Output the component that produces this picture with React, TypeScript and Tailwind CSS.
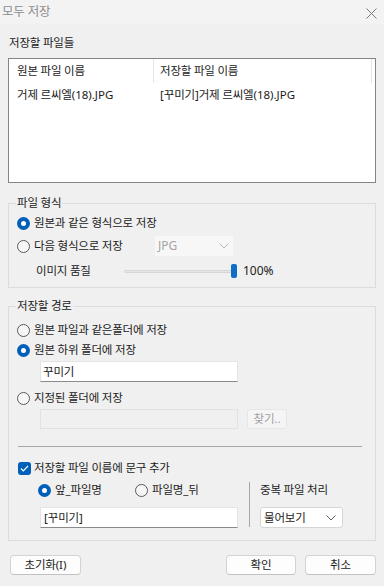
import React from "react";

const FONT = "font-['Noto_Sans','Noto_Sans_CJK_KR',sans-serif]";

function Radio({ checked }: { checked?: boolean }) {
  return checked ? (
    <span className="flex h-[13px] w-[13px] shrink-0 items-center justify-center rounded-full bg-[#005fb8]">
      <span className="h-[5px] w-[5px] rounded-full bg-white" />
    </span>
  ) : (
    <span className="h-[13px] w-[13px] shrink-0 rounded-full border border-[#5a5a5a] bg-[#f6f6f6]" />
  );
}

function Chevron({ color = "#5f5f5f" }: { color?: string }) {
  return (
    <svg width="10" height="6" viewBox="0 0 10 6" fill="none">
      <path d="M0.5 0.5 L5 5 L9.5 0.5" stroke={color} strokeWidth="1" />
    </svg>
  );
}

function Legend({ children }: { children: React.ReactNode }) {
  return (
    <div className="relative flex h-[16px] items-center">
      <div className="absolute left-0 right-0 top-[8px] h-px bg-[#dcdcdc]" />
      <span className="relative ml-[8px] bg-[#f0f0f0] px-[1px] leading-[16px]">{children}</span>
    </div>
  );
}

function Button({ children, className = "" }: { children: React.ReactNode; className?: string }) {
  return (
    <div
      className={`flex h-[20px] items-center justify-center rounded-[4px] border border-[#d3d3d3] border-b-[#c2c2c2] bg-[#fdfdfd] ${className}`}
    >
      {children}
    </div>
  );
}

export default function App() {
  return (
    <div className={`${FONT} h-[586px] w-[384px] overflow-hidden bg-[#f0f0f0] text-[11.5px] tracking-[-0.2px] text-[#1b1b1b]`}>
      {/* title bar */}
      <div className="flex h-[24px] items-center justify-between bg-[#f3f3f3] pl-[2px] pr-[6px]">
        <span className="text-[12.5px] tracking-[-0.2px] text-[#8c8c8c]">모두 저장</span>
        <svg width="11" height="11" viewBox="0 0 11 11" fill="none" className="mr-[1px] mt-[2px]">
          <path d="M0.5 0.5 L10.5 10.5 M10.5 0.5 L0.5 10.5" stroke="#7a7a7a" strokeWidth="1" />
        </svg>
      </div>

      <div className="px-[8px]">
        {/* files list */}
        <div className="mt-[11px] pl-[1px] leading-[16px]">저장할 파일들</div>
        <div className="mt-[7px] h-[125px] border border-[#858585] bg-white">
          <div className="flex h-[24px]">
            <div className="flex w-[145px] items-center border-r border-[#e5e5e5] pl-[8px]">원본 파일 이름</div>
            <div className="flex flex-1 items-center border-r border-[#e5e5e5] pl-[6px]">저장할 파일 이름</div>
            <div className="w-[3px]" />
          </div>
          <div className="flex h-[24px]">
            <div className="flex w-[145px] items-center pl-[8px]">
              거제 르씨엘<span className="tracking-normal">(18).JPG</span>
            </div>
            <div className="flex flex-1 items-center pl-[6px]">
              <span className="tracking-normal">[</span>꾸미기<span className="tracking-normal">]</span>거제 르씨엘
              <span className="tracking-normal">(18).JPG</span>
            </div>
          </div>
        </div>

        {/* file format group */}
        <div className="mt-[12px]">
          <Legend>파일 형식</Legend>
          <div className="-mt-[8px] h-[85px] border border-t-0 border-[#dcdcdc] px-[8px] pt-[10px]">
            <div className="flex h-[20px] items-center gap-[4px]">
              <Radio checked />
              <span>원본과 같은 형식으로 저장</span>
            </div>
            <div className="mt-[3px] flex h-[20px] items-center">
              <Radio />
              <span className="ml-[4px] w-[121px]">다음 형식으로 저장</span>
              <div className="flex h-[20px] w-[78px] items-center justify-between bg-[#f7f7f7] pl-[3px] pr-[4px] text-[#a5a5a5]">
                <span className="text-[12px] tracking-normal">JPG</span>
                <Chevron color="#b8b8b8" />
              </div>
            </div>
            <div className="mt-[5px] flex h-[20px] items-center">
              <span className="ml-[19px] w-[88px]">이미지 품질</span>
              <div className="relative flex h-[14px] w-[113px] items-center">
                <div className="h-[3px] w-full rounded-full border border-[#d6d6d6] bg-[#e6e6e6]" />
                <div className="absolute right-0 top-0 h-[14px] w-[6px] rounded-[2px] bg-[#0f6fc6]" />
              </div>
              <span className="ml-[6px] text-[12px] tracking-normal">100%</span>
            </div>
          </div>
        </div>

        {/* save path group */}
        <div className="mt-[10px]">
          <Legend>저장할 경로</Legend>
          <div className="-mt-[8px] h-[235px] border border-t-0 border-[#dcdcdc] pt-[14px]">
            <div className="px-[8px]">
              <div className="flex h-[20px] items-center gap-[4px]">
                <Radio />
                <span>원본 파일과 같은폴더에 저장</span>
              </div>
              <div className="flex h-[20px] items-center gap-[4px]">
                <Radio checked />
                <span>원본 하위 폴더에 저장</span>
              </div>
              <div className="ml-[23px] mt-[1px] flex h-[21px] w-[198px] items-center border border-[#e4e4e4] border-b-[#8a8a8a] bg-white pl-[2px]">
                꾸미기
              </div>
              <div className="mt-[6px] flex h-[20px] items-center gap-[4px]">
                <Radio />
                <span>지정된 폴더에 저장</span>
              </div>
              <div className="mt-[1px] flex h-[20px] items-center">
                <div className="ml-[23px] h-[20px] w-[198px] border border-[#e2e2e2] bg-[#f0f0f0]" />
                <div className="ml-[9px] flex h-[20px] w-[40px] items-center justify-center rounded-[3px] border border-[#e6e6e6] bg-[#f5f5f5] text-[#a0a0a0]">
                  찾기<span className="tracking-normal">..</span>
                </div>
              </div>
            </div>

            <div className="ml-[9px] mr-[13px] mt-[17px] h-px bg-[#a7a7a7]" />

            <div className="px-[9px]">
              <div className="mt-[14px] flex h-[14px] items-center gap-[3px]">
                <span className="flex h-[13px] w-[13px] items-center justify-center rounded-[3px] bg-[#005fb8]">
                  <svg width="9" height="7" viewBox="0 0 9 7" fill="none">
                    <path d="M1 3.5 L3.3 5.8 L8 1" stroke="white" strokeWidth="1.2" />
                  </svg>
                </span>
                <span>저장할 파일 이름에 문구 추가</span>
              </div>
              <div className="mt-[5px] flex">
                <div className="w-[231px]">
                  <div className="flex h-[20px] items-center">
                    <span className="ml-[20px]">
                      <Radio checked />
                    </span>
                    <span className="ml-[4px] w-[80px]">
                      앞<span className="tracking-normal">_</span>파일명
                    </span>
                    <Radio />
                    <span className="ml-[4px]">
                      파일명<span className="tracking-normal">_</span>뒤
                    </span>
                  </div>
                  <div className="ml-[22px] mt-[7px] flex h-[21px] w-[198px] items-center border border-[#e4e4e4] border-b-[#8a8a8a] bg-white pl-[3px]">
                    <span className="tracking-normal">[</span>꾸미기<span className="tracking-normal">]</span>
                  </div>
                </div>
                <div className="mt-[2px] h-[45px] w-px bg-[#a7a7a7]" />
                <div className="ml-[10px]">
                  <div className="flex h-[20px] items-center">중복 파일 처리</div>
                  <div className="mt-[7px] flex h-[21px] w-[83px] items-center justify-between rounded-[3px] border border-[#d6d6d6] bg-white pl-[3px] pr-[6px]">
                    <span>물어보기</span>
                    <Chevron />
                  </div>
                </div>
              </div>
            </div>
          </div>
        </div>

        {/* buttons */}
        <div className="mt-[14px] flex items-center">
          <Button className="ml-[2px] w-[71px]">
            초기화<span className="tracking-normal">(I)</span>
          </Button>
          <div className="flex-1" />
          <Button className="w-[70px]">확인</Button>
          <Button className="ml-[9px] w-[71px]">취소</Button>
        </div>
      </div>
    </div>
  );
}
